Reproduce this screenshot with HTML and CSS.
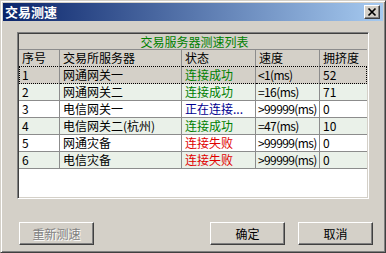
FILE: index.html
```html
<!DOCTYPE html>
<html lang="zh-CN">
<head>
  <meta charset="UTF-8">
  <title>交易测速</title>
  <link rel="stylesheet" href="styles.css">
</head>
<body>
<div class="window">
  <div class="titlebar">
    <span class="title">交易测速</span>
    <span class="close-btn">
      <svg width="14" height="12" viewBox="0 0 14 12">
        <path d="M3.5 2.5 L10.5 9.5 M10.5 2.5 L3.5 9.5" stroke="#000" stroke-width="1.7" fill="none"/>
      </svg>
    </span>
  </div>

  <div class="content">
    <div class="list-box">
      <table class="grid">
        <colgroup>
          <col class="col-no">
          <col class="col-name">
          <col class="col-state">
          <col class="col-speed">
          <col class="col-load">
        </colgroup>
        <thead>
          <tr>
            <th colspan="5" class="caption">交易服务器测速列表</th>
          </tr>
          <tr class="head">
            <th>序号</th>
            <th>交易所服务器</th>
            <th>状态</th>
            <th>速度</th>
            <th>拥挤度</th>
          </tr>
        </thead>
        <tbody>
          <tr class="selected">
            <td>1</td><td>网通网关一</td><td class="ok">连接成功</td><td class="speed">&lt;1(ms)</td><td>52</td>
          </tr>
          <tr class="alt">
            <td>2</td><td>网通网关二</td><td class="ok">连接成功</td><td class="speed">=16(ms)</td><td>71</td>
          </tr>
          <tr>
            <td>3</td><td>电信网关一</td><td class="busy">正在连接...</td><td class="speed">&gt;99999(ms)</td><td>0</td>
          </tr>
          <tr class="alt">
            <td>4</td><td>电信网关二(杭州)</td><td class="ok">连接成功</td><td class="speed">=47(ms)</td><td>10</td>
          </tr>
          <tr>
            <td>5</td><td>网通灾备</td><td class="fail">连接失败</td><td class="speed">&gt;99999(ms)</td><td>0</td>
          </tr>
          <tr class="alt">
            <td>6</td><td>电信灾备</td><td class="fail">连接失败</td><td class="speed">&gt;99999(ms)</td><td>0</td>
          </tr>
        </tbody>
      </table>
    </div>

    <div class="buttons">
      <button class="btn btn-retest" disabled>重新测速</button>
      <button class="btn">确定</button>
      <button class="btn">取消</button>
    </div>
  </div>
</div>
</body>
</html>
```

FILE: styles.css
```css
* {
  box-sizing: border-box;
}

body {
  margin: 0;
  background-color: #d4d0c8;
  font-family: "Noto Sans CJK SC", "Liberation Sans", sans-serif;
  font-size: 12px;
  color: #000;
}

.window {
  width: 386px;
  height: 253px;
  background-color: #d4d0c8;
  border: 1px solid;
  border-color: #d4d0c8 #404040 #404040 #d4d0c8;
  box-shadow: inset 1px 1px #ffffff, inset -1px -1px #808080;
  padding: 2px;
}

/* 标题栏 */
.titlebar {
  height: 18px;
  display: flex;
  align-items: center;
  justify-content: space-between;
  background: linear-gradient(to right, #0a246a, #a6caf0);
  padding: 0 3px 0 2px;
}

.title {
  color: #fff;
  font-weight: bold;
  font-size: 13px;
  line-height: 18px;
}

.close-btn {
  width: 16px;
  height: 14px;
  display: flex;
  align-items: center;
  justify-content: center;
  background-color: #d4d0c8;
  border: 1px solid;
  border-color: #ffffff #404040 #404040 #ffffff;
  box-shadow: inset -1px -1px #808080;
}

.content {
  padding: 11px 0 0 14px;
}

/* 列表 */
.list-box {
  width: 352px;
  height: 167px;
  background-color: #fff;
  border: 1px solid;
  border-color: #808080 #ffffff #ffffff #808080;
  box-shadow: inset 1px 1px #404040, inset -1px -1px #d4d0c8;
  padding: 1px;
}

.grid {
  width: 348px;
  table-layout: fixed;
  border-collapse: separate;
  border-spacing: 0;
}

.col-no { width: 41px; }
.col-name { width: 122px; }
.col-state { width: 74px; }
.col-speed { width: 64px; }
.col-load { width: 47px; }

.grid th,
.grid td {
  height: 17px;
  padding: 0 0 0 3px;
  line-height: 16px;
  text-align: left;
  font-weight: normal;
  white-space: nowrap;
  overflow: hidden;
  border-right: 1px solid #8c8c8c;
  border-bottom: 1px solid #8c8c8c;
}

.grid th:last-child,
.grid td:last-child {
  border-right: none;
}

.grid td.speed {
  padding-left: 2px;
  letter-spacing: -0.6px;
}

.grid .caption {
  height: 16px;
  line-height: 15px;
  text-align: center;
  color: #008000;
  background-color: #d4d0c8;
  border-right: none;
}

.grid .head th {
  background-color: #d4d0c8;
  border-bottom: 1px dotted #000;
}

.grid tr.selected td {
  background-color: #d4d0c8;
  border-bottom: 1px dotted #000;
}

.grid tr.selected td:first-child {
  border-left: 1px dotted #000;
  padding-left: 2px;
}

.grid tr.selected td:last-child {
  border-right: 1px dotted #000;
}

.grid tr.alt td {
  background-color: #eaf1e9;
}

.ok { color: #008000; }
.busy { color: #000090; }
.fail { color: #e00000; }

/* 按钮 */
.buttons {
  display: flex;
  gap: 13px;
  width: 354px;
  margin: 23px 0 0 2px;
}

.btn {
  width: 75px;
  height: 23px;
  padding: 0;
  font-family: inherit;
  font-size: 12px;
  color: #000;
  background-color: #d4d0c8;
  border: 1px solid;
  border-color: #ffffff #404040 #404040 #ffffff;
  box-shadow: inset -1px -1px #808080;
  border-radius: 0;
}

.btn-retest {
  margin-right: auto;
}

.btn:disabled {
  color: #808080;
  text-shadow: 1px 1px #ffffff;
}
```
